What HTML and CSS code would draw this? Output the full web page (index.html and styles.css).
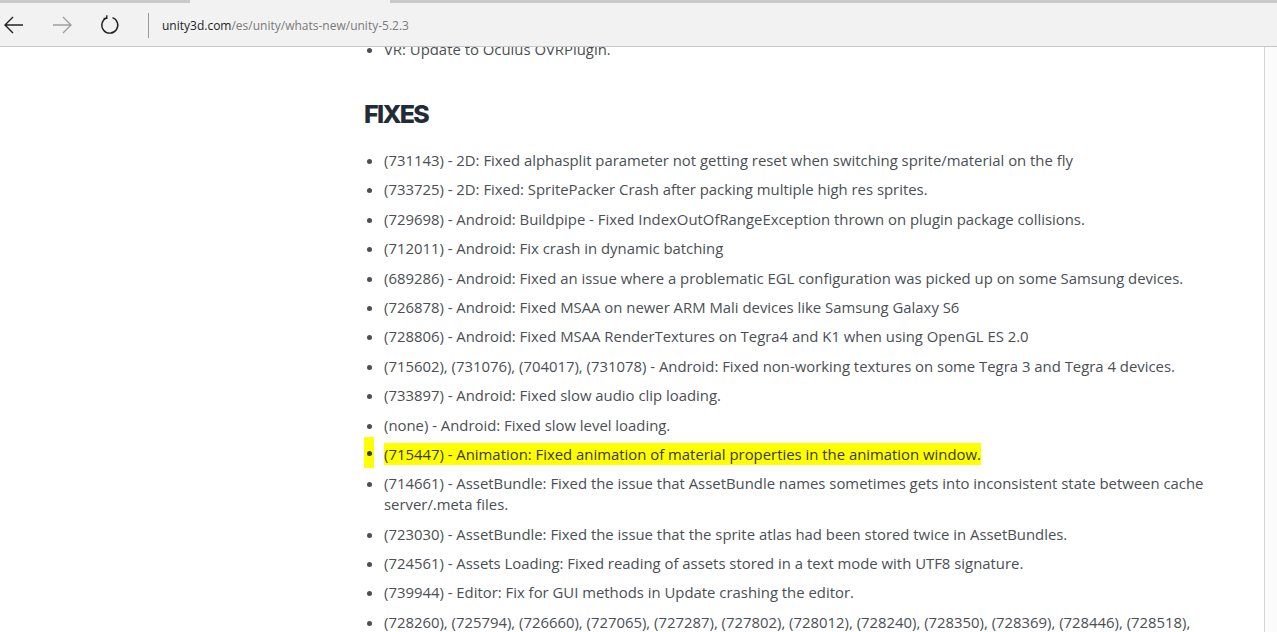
FILE: index.html
```html
<!DOCTYPE html>
<html lang="es">
<head>
    <meta charset="UTF-8">
    <title>Unity 5.2.3</title>
    <link rel="stylesheet" href="styles.css">
</head>
<body>
    <div class="tabstrip">
        <div class="tab-active"></div>
    </div>
    <div class="toolbar">
        <button class="nav-btn">
            <svg width="22" height="20" viewBox="0 0 22 20"><path d="M20 10H2M10 2L2 10l8 8" fill="none" stroke="#222" stroke-width="1.4"/></svg>
        </button>
        <button class="nav-btn disabled">
            <svg width="22" height="20" viewBox="0 0 22 20"><path d="M2 10h18M12 2l8 8-8 8" fill="none" stroke="#a0a0a0" stroke-width="1.4"/></svg>
        </button>
        <button class="nav-btn">
            <svg width="22" height="22" viewBox="0 0 22 22"><path d="M13.5 3.6A8 8 0 1 1 7.6 3.8" fill="none" stroke="#222" stroke-width="1.4"/><path d="M7.8 1.2v3.2H4.6" fill="none" stroke="#222" stroke-width="1.4"/></svg>
        </button>
        <div class="divider"></div>
        <div class="url"><span class="host">unity3d.com</span>/es/unity/whats-new/unity-5.2.3</div>
    </div>

    <div class="viewport">
        <div class="page">
            <div class="content">
                <ul class="notes prev">
                    <li>VR: Update to Oculus OVRPlugin.</li>
                </ul>

                <h2>FIXES</h2>

                <ul class="notes">
                    <li>(731143) - 2D: Fixed alphasplit parameter not getting reset when switching sprite/material on the fly</li>
                    <li>(733725) - 2D: Fixed: SpritePacker Crash after packing multiple high res sprites.</li>
                    <li>(729698) - Android: Buildpipe - Fixed IndexOutOfRangeException thrown on plugin package collisions.</li>
                    <li>(712011) - Android: Fix crash in dynamic batching</li>
                    <li>(689286) - Android: Fixed an issue where a problematic EGL configuration was picked up on some Samsung devices.</li>
                    <li>(726878) - Android: Fixed MSAA on newer ARM Mali devices like Samsung Galaxy S6</li>
                    <li>(728806) - Android: Fixed MSAA RenderTextures on Tegra4 and K1 when using OpenGL ES 2.0</li>
                    <li>(715602), (731076), (704017), (731078) - Android: Fixed non-working textures on some Tegra 3 and Tegra 4 devices.</li>
                    <li>(733897) - Android: Fixed slow audio clip loading.</li>
                    <li>(none) - Android: Fixed slow level loading.</li>
                    <li class="found"><span class="mark-dot"></span><span class="mark">(715447) - Animation: Fixed animation of material properties in the animation window.</span></li>
                    <li>(714661) - AssetBundle: Fixed the issue that AssetBundle names sometimes gets into inconsistent state between cache server/.meta files.</li>
                    <li>(723030) - AssetBundle: Fixed the issue that the sprite atlas had been stored twice in AssetBundles.</li>
                    <li>(724561) - Assets Loading: Fixed reading of assets stored in a text mode with UTF8 signature.</li>
                    <li>(739944) - Editor: Fix for GUI methods in Update crashing the editor.</li>
                    <li>(728260), (725794), (726660), (727065), (727287), (727802), (728012), (728240), (728350), (728369), (728446), (728518), (728610) - Graphics: Fixed various crashes.</li>
                </ul>
            </div>
        </div>
        <div class="scrollbar"></div>
    </div>
</body>
</html>
```

FILE: styles.css
```css
body {
    margin: 0;
    height: 632px;
    overflow: hidden;
    background: white;
    font-family: 'Open Sans', sans-serif;
    display: flex;
    flex-direction: column;
}
.tabstrip {
    height: 3px;
    background: #c9c9c9;
    display: flex;
}
.tab-active {
    margin-left: 190px;
    width: 200px;
    background: #f2f2f2;
}
.toolbar {
    height: 43px;
    background: #f2f2f2;
    border-bottom: 1px solid #c6c6c6;
    display: flex;
    align-items: center;
    padding-left: 3px;
}
.nav-btn {
    background: none;
    border: none;
    padding: 0;
    width: 48px;
    height: 30px;
    display: flex;
    align-items: center;
    justify-content: flex-start;
    margin-top: 1px;
}
.divider {
    width: 1px;
    height: 25px;
    background: #9a9a9a;
    margin-left: 1px;
    margin-right: 13px;
    margin-top: 1px;
}
.url {
    font-family: 'Open Sans', sans-serif;
    font-size: 12px;
    color: #7a7a7a;
    margin-top: 1px;
}
.url .host {
    color: #1e1e1e;
}
.viewport {
    flex: 1;
    display: flex;
    overflow: hidden;
}
.page {
    flex: 1;
    overflow: hidden;
    border-right: 1px solid #d6d6d6;
}
.scrollbar {
    width: 12px;
    background: #fbfbfb;
}
.content {
    margin-left: 364px;
    width: 850px;
    margin-top: -8px;
}
h2 {
    font-family: 'Inter', sans-serif;
    font-weight: 800;
    font-size: 25px;
    color: #222c37;
    margin: 39px 0 21px;
    letter-spacing: -1.7px;
}
.notes {
    margin: 0;
    padding-left: 20px;
    font-size: 14.88px;
    line-height: 21px;
    color: #4a4f55;
}
.notes li {
    margin-bottom: 8.4px;
}
.notes.prev li {
    margin-bottom: 0;
}
.found {
    list-style: none;
    position: relative;
}
.mark {
    background: #ffff00;
    color: #3a3a20;
    padding: 1px 0;
}
.mark-dot {
    position: absolute;
    left: -20px;
    top: -7px;
    width: 10px;
    height: 31px;
    background: #ffff00;
}
.mark-dot::after {
    content: "";
    position: absolute;
    left: 3px;
    top: 14px;
    width: 5px;
    height: 5px;
    border-radius: 50%;
    background: #3a3a20;
}
```
